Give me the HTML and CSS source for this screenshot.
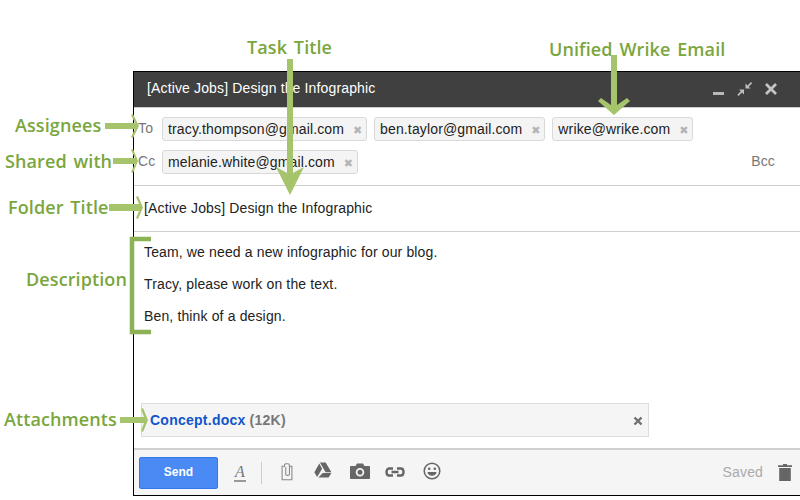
FILE: index.html
```html
<!DOCTYPE html>
<html lang="en">
<head>
<meta charset="utf-8">
<title>Compose</title>
<link rel="stylesheet" href="styles.css">
</head>
<body>
<div class="page">
  <main class="window">
    <header class="titlebar">
      <span class="title">[Active Jobs] Design the Infographic</span>
      <div class="win-actions">
        <svg class="win-icon" viewBox="0 0 16 16"><rect x="2" y="11" width="11" height="3" fill="#b9b9b9"/></svg>
        <svg class="win-icon" viewBox="0 0 16 16"><path d="M8.500 7.500V2.500L10.500 4.500 14 1 15.200 2.200 11.700 5.700 13.500 7.500ZM7 8.500V13.500L5 11.500 1.500 15 .300 13.800 3.800 10.300 2 8.500Z" fill="#bdbdbd"/></svg>
        <svg class="win-icon" viewBox="0 0 16 16"><path d="M3 3 13 13M13 3 3 13" stroke="#c4c4c4" stroke-width="2.800"/></svg>
      </div>
    </header>

    <section class="recipients">
      <div class="rec-row">
        <span class="rec-label">To</span>
        <span class="chip">tracy.thompson@gmail.com<span class="chip-x">✖</span></span>
        <span class="chip">ben.taylor@gmail.com<span class="chip-x">✖</span></span>
        <span class="chip">wrike@wrike.com<span class="chip-x">✖</span></span>
      </div>
      <div class="rec-row">
        <span class="rec-label">Cc</span>
        <span class="chip">melanie.white@gmail.com<span class="chip-x">✖</span></span>
        <span class="bcc">Bcc</span>
      </div>
    </section>

    <div class="subject">[Active Jobs] Design the Infographic</div>

    <section class="body-text">
      <p>Team, we need a new infographic for our blog.</p>
      <p>Tracy, please work on the text.</p>
      <p>Ben, think of a design.</p>
    </section>

    <div class="attachment">
      <span class="att-name">Concept.docx</span>
      <span class="att-size">(12K)</span>
      <svg class="att-x" viewBox="0 0 10 10"><path d="M1.500 1.500 8.500 8.500M8.500 1.500 1.500 8.500" stroke="#6f6f6f" stroke-width="2.400"/></svg>
    </div>

    <footer class="toolbar">
      <button class="send">Send</button>
      <span class="format">A</span>
      <span class="divider"></span>
      <svg class="tool clip" viewBox="0 0 16 22"><path d="M5 5V2.500C5 1.700 5.700 1 6.500 1H9C10.500 1 11 2 11 3V14C11 15.500 6.500 15.500 6.500 14V5M5 4H2V20.500H14V4H11" fill="none" stroke="#888" stroke-width="1.300"/></svg>
      <svg class="tool drive" viewBox="0 0 20 18"><path d="M6.500 0.500H13L19.500 11.500H13Z M5.800 1.800 9 7.500 3.400 17 0.300 11.500Z M9.800 12.500H19.500L16.300 17.500H4.800Z" fill="#666"/></svg>
      <svg class="tool camera" viewBox="0 0 20 16"><path fill-rule="evenodd" d="M1 3H5.500L7 .5H13L14.500 3H19C19.500 3 20 3.500 20 4V15C20 15.500 19.500 16 19 16H1C.500 16 0 15.500 0 15V4C0 3.500 .500 3 1 3ZM10 5A4.300 4.300 0 1 0 10 13.600 4.300 4.300 0 1 0 10 5ZM10 6.800A2.500 2.500 0 1 1 10 11.800 2.500 2.500 0 1 1 10 6.800Z" fill="#666"/></svg>
      <svg class="tool link" viewBox="0 0 20 10"><path d="M8 1.500H4C.700 1.500 .700 8.500 4 8.500H8M12 1.500H16C19.300 1.500 19.300 8.500 16 8.500H12M6.500 5H13.500" fill="none" stroke="#666" stroke-width="2.400"/></svg>
      <svg class="tool smile" viewBox="0 0 18 18"><circle cx="9" cy="9" r="7.800" fill="none" stroke="#666" stroke-width="1.500"/><circle cx="6.200" cy="6.800" r="1.300" fill="#666"/><circle cx="11.800" cy="6.800" r="1.300" fill="#666"/><path d="M4.500 10H13.500C13.200 15 4.800 15 4.500 10Z" fill="#666"/></svg>
      <span class="saved">Saved</span>
      <svg class="tool trash" viewBox="0 0 14 17"><path d="M5 0H9V1.200H14V3H0V1.200H5ZM1.200 4H12.800V17H1.200Z" fill="#666"/></svg>
    </footer>
  </main>

  <span class="note note-task">Task Title</span>
  <span class="note note-unified">Unified Wrike Email</span>
  <span class="note note-assign">Assignees</span>
  <span class="note note-shared">Shared with</span>
  <span class="note note-folder">Folder Title</span>
  <span class="note note-desc">Description</span>
  <span class="note note-attach">Attachments</span>

  <svg class="marks" viewBox="0 0 800 500">
    <path d="M287 59H293V173L304 167 290 195 276 167 287 173Z"/>
    <path d="M611 55H617V105L627 98 630 101 614 115 598 101 601 98 611 105Z"/>
    <path d="M105 123H135L131 115 133 114 139 126 133 138 131 137 135 129H105Z"/>
    <path d="M113 158H135L131 150 133 149 138 161 133 173 131 172 135 164H113Z"/>
    <path d="M109 204H139L136 197 138 196 143 207.500 138 219 136 218 139 211H109Z"/>
    <path d="M120 417H144L141 409 143 408 148 420 143 432 141 431 144 423H120Z"/>
    <path class="bracket" d="M151 239H132V332H151"/>
  </svg>
</div>
</body>
</html>
```

FILE: styles.css
```css
* { box-sizing: border-box; }

html, body {
  margin: 0;
  background: #fff;
}

.page {
  position: relative;
  width: 800px;
  height: 500px;
  overflow: hidden;
  padding: 71px 0 0 133px;
  font-family: "Liberation Sans", Arial, sans-serif;
  font-size: 14px;
  letter-spacing: 0.14px;
  color: #222;
}

.window {
  width: 667px;
  height: 425px;
  display: flex;
  flex-direction: column;
  border: solid #000;
  border-width: 1px 0 1px 1px;
}

.titlebar {
  flex: 0 0 36px;
  display: flex;
  align-items: center;
  justify-content: space-between;
  padding: 0 21px 4px 13px;
  background: #404040;
  border-bottom: 1px solid #ccc;
  color: #fff;
}

.title { font-size: 14px; }

.win-actions {
  display: flex;
  gap: 10px;
  padding-top: 3px;
}

.win-icon { width: 16px; height: 16px; }

.recipients {
  flex: 0 0 78px;
  padding: 9px 25px 0 4px;
  display: flex;
  flex-direction: column;
  gap: 9px;
  border-bottom: 1px solid #cfcfcf;
}

.rec-row {
  display: flex;
  align-items: center;
  height: 24px;
  gap: 7px;
  position: relative;
}

.rec-label {
  width: 17px;
  color: #777;
  margin-top: -3px;
}

.chip {
  display: flex;
  align-items: center;
  height: 24px;
  padding: 0 3px 0 5px;
  background: #f4f4f4;
  border: 1px solid #d9d9d9;
  border-radius: 3px;
}

.chip-x {
  margin-left: 9px;
  font-size: 11px;
  width: 10px;
  letter-spacing: 0;
  color: #b5b5b5;
  font-family: "DejaVu Sans", sans-serif;
  margin-top: 2px;
}

.bcc {
  margin-left: auto;
  margin-top: -2px;
  color: #777;
}

.subject {
  flex: 0 0 46px;
  display: flex;
  align-items: center;
  padding: 0 0 2px 10px;
  border-bottom: 1px solid #cfcfcf;
}

.body-text {
  flex: 1;
  padding: 12px 0 0 10px;
}

.body-text p {
  margin: 0 0 16px;
  line-height: 16px;
}

.attachment {
  flex: 0 0 34px;
  display: flex;
  align-items: center;
  gap: 4px;
  width: 508px;
  margin: 0 0 11px 7px;
  padding: 0 5px 0 8px;
  background: #f5f5f5;
  border: 1px solid #dedede;
  font-weight: bold;
  font-size: 14px;
  letter-spacing: 0.25px;
}

.att-name { color: #1155cc; }
.att-size { color: #777; }

.att-x {
  width: 10px;
  height: 10px;
  margin-left: auto;
  margin-top: 2px;
}

.toolbar {
  flex: 0 0 47px;
  display: flex;
  align-items: center;
  padding: 0 8px 0 5px;
  background: #f5f5f5;
  border-top: 2px solid #cfcfcf;
}

.send {
  width: 79px;
  height: 32px;
  border: 1px solid #3079ed;
  border-radius: 2px;
  background: #4a8af4;
  color: #fff;
  font: bold 12px "Liberation Sans", Arial, sans-serif;
  padding-bottom: 3px;
}

.format {
  margin-left: 16px;
  font: italic 16px "Liberation Serif", serif;
  color: #777;
  border-bottom: 2px solid #999;
  line-height: 16px;
  padding: 0 1px;
  width: 12px;
}

.divider {
  width: 1px;
  height: 22px;
  margin: 0 18px 0 15px;
  background: #ccc;
}

.tool { display: block; }
.clip { width: 14px; height: 18px; margin-right: 20px; margin-top: -1px; }
.drive { width: 18px; height: 16px; margin-right: 18px; margin-top: -5px; }
.camera { width: 20px; height: 16px; margin-right: 15px; margin-top: -4px; }
.link { width: 20px; height: 10px; margin-right: 18px; margin-top: -2px; }
.smile { width: 18px; height: 18px; margin-top: -3px; }
.saved { margin-left: auto; color: #aaa; margin-right: 15px; margin-top: -2px; }
.trash { width: 14px; height: 17px; }

.note {
  position: absolute;
  font-family: "Open Sans", sans-serif;
  font-size: 18px;
  font-weight: 600;
  line-height: 22px;
  color: #7aa63e;
  white-space: nowrap;
  letter-spacing: 0.1px;
  word-spacing: 2px;
}

.note-task { left: 247px; top: 36px; }
.note-unified { left: 549px; top: 38px; }
.note-assign { left: 15px; top: 114px; }
.note-shared { left: 5px; top: 150px; }
.note-folder { left: 8px; top: 196px; }
.note-desc { left: 26px; top: 268px; }
.note-attach { left: 4px; top: 408px; }

.marks {
  position: absolute;
  left: 0;
  top: 0;
  width: 800px;
  height: 500px;
  pointer-events: none;
  fill: #a5c46b;
}

.marks .bracket {
  fill: none;
  stroke: #8db255;
  stroke-width: 4.500px;
}
```
